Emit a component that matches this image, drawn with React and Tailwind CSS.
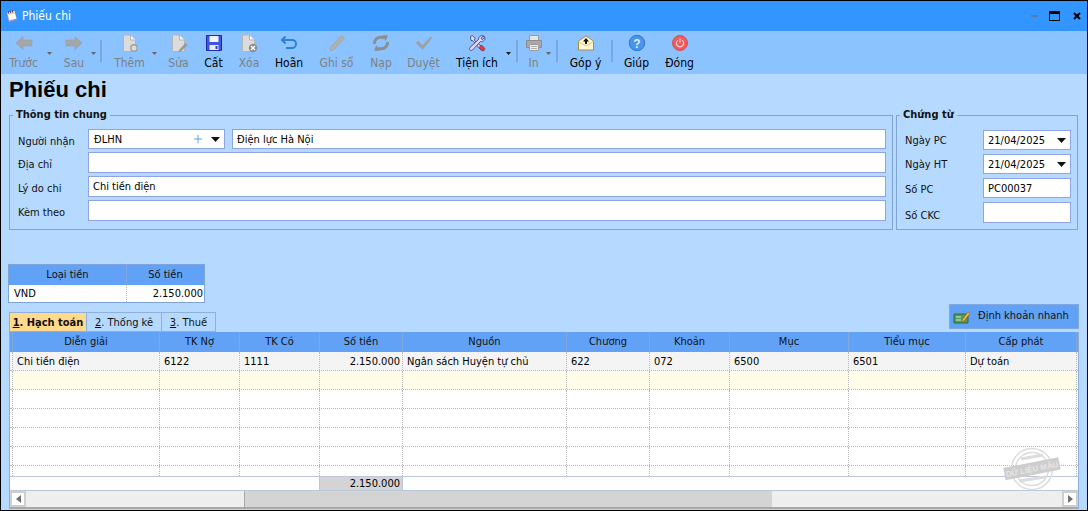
import React from "react";

const Caret = ({ cls = "", dark }) => (
  <svg width="5" height="3" viewBox="0 0 5 3" className={"block shrink-0 mt-[21px] " + cls}>
    <path d="M0 0H5L2.5 3Z" fill={dark ? "#1a1a1a" : "#666"} />
  </svg>
);
const Sep = ({ cls = "" }) => <div className={"w-[2px] h-[22px] mt-[9px] bg-[#79a8dc] shrink-0 " + cls} />;

const Doc = ({ children, fill = "#dcdcdc" }) => (
  <svg width="20" height="20" viewBox="0 0 20 20">
    <path d="M3.5 2H10.5L15.5 7V18.5H3.5Z" fill={fill} stroke="#b4b4b4" />
    <path d="M10.5 2V7H15.5" fill="#f4f4f4" stroke="#b4b4b4" />
    {children}
  </svg>
);

const icons = {
  back: (
    <svg width="20" height="20" viewBox="0 0 20 20"><path d="M2 10L9 3.5V7H18V13H9V16.5Z" fill="#a6a6a6" stroke="#999" strokeWidth=".5" /></svg>
  ),
  next: (
    <svg width="20" height="20" viewBox="0 0 20 20"><path d="M18 10L11 3.5V7H2V13H11V16.5Z" fill="#a6a6a6" stroke="#999" strokeWidth=".5" /></svg>
  ),
  add: <Doc><circle cx="14" cy="15" r="3.2" fill="#dcdcdc" stroke="#a0a0a0" strokeWidth="1.4" /></Doc>,
  edit: <Doc><path d="M10 17L16.5 10L18.5 12L12 18.5L9.5 19Z" fill="#9a9a9a" /></Doc>,
  del: <Doc><circle cx="14" cy="15" r="4.2" fill="#8c8c8c" /><path d="M12 13L16 17M16 13L12 17" stroke="#fff" strokeWidth="1.3" /></Doc>,
  save: (
    <svg width="20" height="20" viewBox="0 0 20 20">
      <path d="M2.5 2.5H17.5V17.5H2.5Z" fill="#3d55e0" stroke="#1c2bb0" />
      <path d="M5.5 3V9H14.5V3Z" fill="#eef2ff" />
      <path d="M5.5 12H14.5V17H5.5Z" fill="#e8eaf6" />
      <path d="M11.5 13H13.5V16H11.5Z" fill="#2d3fc0" />
    </svg>
  ),
  undo: (
    <svg width="20" height="20" viewBox="0 0 20 20" fill="none">
      <path d="M6.5 3.5L3 7L6.5 10.5" stroke="#2f7fdc" strokeWidth="2" />
      <path d="M3.5 7H13C15.2 7 17 8.6 17 10.8C17 13 15.2 15 13 15H7" stroke="#2f7fdc" strokeWidth="2" />
    </svg>
  ),
  pencil: (
    <svg width="20" height="20" viewBox="0 0 20 20"><path d="M14.5 2.5L17.5 5L7 16.5L3 18L4 13.5Z" fill="#b0b0b0" stroke="#a0a0a0" strokeWidth=".6" /></svg>
  ),
  reload: (
    <svg width="20" height="20" viewBox="0 0 20 20" fill="none" stroke="#8e8e8e" strokeWidth="3">
      <path d="M3.5 11C3 7 6 4.3 10 4.3C11 4.3 12 4.5 13 5" />
      <path d="M16.5 9C17 13 14 15.7 10 15.7C9 15.7 8 15.5 7 15" />
      <path d="M11.5 2L17 2.5L14.5 8Z" fill="#8e8e8e" stroke="none" />
      <path d="M8.5 18L3 17.5L5.5 12Z" fill="#8e8e8e" stroke="none" />
    </svg>
  ),
  check: (
    <svg width="20" height="20" viewBox="0 0 20 20"><path d="M1.5 9.5L4.5 8L8.5 12L17 3.5L18.5 4.5L8.5 17Z" fill="#a0a0a0" /></svg>
  ),
  tools: (
    <svg width="20" height="20" viewBox="0 0 20 20">
      <path d="M3.5 3.5L5.5 2.5L8 5.5L7 7L15.5 14.5L13.5 16.5L5.5 7.5L4 7.5Z" fill="#dfe6f6" stroke="#4a3f8a" strokeWidth=".9" />
      <path d="M17.5 3.5C15 1.5 11.5 3 11.5 6.5L3 14.5C1.5 16 3.5 18.5 5.5 17L13.5 8.5C16.5 9 18.5 6.5 18 4.5L15.5 6.5L14 5.5L15.5 3.5Z" fill="#e2d6f6" stroke="#4a3f8a" strokeWidth=".9" />
      <path d="M12 14.5L14.5 12L18 15.5L16.5 18L14.5 17.5Z" fill="#de3a44" stroke="#8f1c22" strokeWidth=".6" />
    </svg>
  ),
  printer: (
    <svg width="20" height="20" viewBox="0 0 20 20">
      <path d="M5.5 2.5H14.5V7.5H5.5Z" fill="#e6e6e6" stroke="#9c9c9c" />
      <path d="M2.5 7.5H17.5V14.5H2.5Z" fill="#a8a8a8" stroke="#8c8c8c" />
      <path d="M5.5 11.5H14.5V17.5H5.5Z" fill="#ececec" stroke="#9c9c9c" />
      <path d="M7 13.5H13M7 15.5H13" stroke="#b0b0b0" />
    </svg>
  ),
  mail: (
    <svg width="20" height="20" viewBox="0 0 20 20">
      <path d="M2.5 8L10 3L17.5 8V17H2.5Z" fill="#fff6d4" stroke="#b08a3c" />
      <path d="M2.5 8.5L10 13L17.5 8.5" fill="none" stroke="#e0c47e" />
      <path d="M10 5L13 8.5H11V11H9V8.5H7Z" fill="#111" />
    </svg>
  ),
  help: (
    <svg width="20" height="20" viewBox="0 0 20 20">
      <circle cx="10" cy="10" r="7.7" fill="#4a94ec" stroke="#2f76d0" />
      <text x="10" y="14.5" textAnchor="middle" fontSize="12" fontWeight="700" fill="#dcecff" fontFamily="Liberation Sans, sans-serif">?</text>
    </svg>
  ),
  power: (
    <svg width="20" height="20" viewBox="0 0 20 20" fill="none">
      <circle cx="10" cy="10" r="7.5" fill="#ee5b5f" stroke="#d94c50" />
      <path d="M7.8 7.4A3.6 3.6 0 1 0 12.2 7.4" stroke="#ffd9d9" strokeWidth="1.1" />
      <path d="M10 5.5V9.5" stroke="#ffd9d9" strokeWidth="1.1" />
    </svg>
  ),
};

const ToolButton = ({ icon, label, cls, off }) => (
  <div className={"flex flex-col items-center shrink-0 whitespace-nowrap " + cls}>
    <div className="h-[20px] w-[20px] mt-[2px]">{icons[icon]}</div>
    <span className={"text-[12px] leading-[20px] " + (off ? "text-[#808080]" : "text-black")}>{label}</span>
  </div>
);

const Toolbar = () => (
  <div className="h-[43px] bg-[#8ac3ff] flex shrink-0">
    <ToolButton icon="back" label="Trước" cls="w-[45px]" off />
    <Caret cls="ml-[1px]" />
    <ToolButton icon="next" label="Sau" cls="ml-[5px] w-[34px]" off />
    <Caret />
    <Sep cls="ml-[4px]" />
    <ToolButton icon="add" label="Thêm" cls="ml-[5px] w-[45px]" off />
    <Caret />
    <ToolButton icon="edit" label="Sửa" cls="w-[43px]" off />
    <ToolButton icon="save" label="Cất" cls="w-[27px]" />
    <ToolButton icon="del" label="Xóa" cls="w-[44px]" off />
    <ToolButton icon="undo" label="Hoãn" cls="w-[36px]" />
    <ToolButton icon="pencil" label="Ghi sổ" cls="w-[59px]" off />
    <ToolButton icon="reload" label="Nạp" cls="w-[30px]" off />
    <ToolButton icon="check" label="Duyệt" cls="w-[55px]" off />
    <ToolButton icon="tools" label="Tiện ích" cls="w-[52px]" />
    <Caret cls="ml-[3px]" dark />
    <Sep cls="ml-[5px]" />
    <ToolButton icon="printer" label="In" cls="ml-[3px] w-[25px]" off />
    <Caret />
    <Sep cls="ml-[5px]" />
    <ToolButton icon="mail" label="Góp ý" cls="ml-[2px] w-[51px]" />
    <Sep />
    <ToolButton icon="help" label="Giúp" cls="w-[47px]" />
    <ToolButton icon="power" label="Đóng" cls="w-[39px]" />
  </div>
);

const Field = ({ children, cls = "h-[21px] flex-1" }) => (
  <div className={"bg-white border border-[#8fa4e4] flex items-center pl-[4px] pt-[2px] whitespace-nowrap " + cls}>{children}</div>
);

const ComboCaret = () => (
  <svg width="9" height="5" viewBox="0 0 9 5" className="shrink-0 -mt-[2px]"><path d="M0 0H9L4.5 5Z" fill="#111" /></svg>
);

const Row = ({ label, children }) => (
  <div className="flex items-center">
    <span className="w-[78px] pl-[8px] pt-[4px] leading-[15px] text-[#111]">{label}</span>
    {children}
  </div>
);

const Group = ({ title, cls, children }) => (
  <div className={"relative border border-[#7fa4d8] shrink-0 " + cls}>
    <span className="absolute -top-[9px] left-[3px] bg-[#b5d9ff] px-[3px] leading-[16px] font-bold text-[#111]">{title}</span>
    {children}
  </div>
);

const DateRow = ({ label, children, cls = "pt-[1px]" }) => (
  <div className="flex items-center">
    <span className={"w-[86px] pl-[8px] leading-[13px] text-[#111] " + cls}>{label}</span>
    {children}
  </div>
);

const gridCols = "grid grid-cols-[2px_147px_80px_80px_83px_164px_83px_80px_119px_117px_111px_2px]";
const heads = ["Diễn giải", "TK Nợ", "TK Có", "Số tiền", "Nguồn", "Chương", "Khoản", "Mục", "Tiểu mục", "Cấp phát"];
const row1 = ["Chi tiền điện", "6122", "1111", "2.150.000", "Ngân sách Huyện tự chủ", "622", "072", "6500", "6501", "Dự toán"];

const DataRow = ({ values, bg = "bg-white", h = "h-[19px]" }) => (
  <div className={gridCols + " border-b border-dotted border-[#b8b8b8] shrink-0 " + bg + " " + h}>
    <div />
    {Array.from({ length: 10 }).map((_, i) => (
      <div key={i} className={"border-l border-dotted border-[#b8b8b8] pl-[4px] pr-[2px] leading-[20px] whitespace-nowrap overflow-hidden text-black " + (i === 3 ? "text-right" : "") }>
        {values ? values[i] : ""}
      </div>
    ))}
    <div className="border-l border-dotted border-[#b8b8b8]" />
  </div>
);

const Arrow = ({ left }) => (
  <div className="w-[16px] bg-white border-2 border-[#cfcfcf] flex items-center justify-center shrink-0">
    <svg width="5" height="8" viewBox="0 0 5 8"><path d={left ? "M5 0V8L0 4Z" : "M0 0V8L5 4Z"} fill="#707070" /></svg>
  </div>
);

const Stamp = () => (
  <svg width="58" height="48" viewBox="0 0 58 48" className="absolute right-[17px] bottom-[16px] pointer-events-none">
    <circle cx="29" cy="24" r="20.5" fill="none" stroke="#dcdcdc" strokeWidth="1.5" />
    <circle cx="29" cy="24" r="16.5" fill="none" stroke="#dcdcdc" strokeWidth="1.5" />
    <path d="M18 14L40 10M16 36L42 32" stroke="#dcdcdc" strokeWidth="3" />
    <g transform="rotate(-11 29 24)">
      <rect x="1" y="17.5" width="56" height="12.5" fill="#cdcdcd" />
      <text x="29" y="27" textAnchor="middle" fontSize="8" fontWeight="700" fill="#e6e6e6" fontFamily="Liberation Sans, sans-serif">DỮ LIỆU MẪU</text>
    </g>
  </svg>
);

export default function App() {
  return (
    <div className="w-[1088px] h-[511px] border border-black bg-[#b5d9ff] flex flex-col overflow-hidden text-[11px] font-['DejaVu_Sans_Condensed','Liberation_Sans',sans-serif]">
      <div className="h-[30px] bg-[#3395ff] flex items-center shrink-0">
        <svg width="14" height="14" viewBox="0 0 14 14" className="ml-[3px]">
          <path d="M2.5 4L10 2.5L13 11L5 13Z" fill="#9d8fd8" />
          <path d="M3.5 3.5L10.5 2L12.5 9.5L5 11.5Z" fill="#fbfbf2" />
          <path d="M3 4L10.5 2.5L11 4.5L3.5 6Z" fill="#f2d75e" />
          <path d="M4.5 2V4.5M6.5 1.5V4M8.5 1V3.5" stroke="#5a4aa8" />
        </svg>
        <span className="ml-[4px] text-[12px] text-white">Phiếu chi</span>
        <div className="ml-auto flex items-center">
          <div className="w-[7px] h-[2px] bg-[#5a7ca8]" />
          <div className="ml-[11px] w-[11px] h-[10px] border border-black border-t-[3px]" />
          <svg width="8" height="8" viewBox="0 0 8 8" className="ml-[13px] mr-[6px]"><path d="M1 1L7 7M7 1L1 7" stroke="#000" strokeWidth="2" /></svg>
        </div>
      </div>
      <Toolbar />
      <div className="h-[41px] pl-[8px] pt-[3px] shrink-0">
        <h1 className="text-[22px] leading-[26px] font-bold text-black font-['Liberation_Sans',sans-serif]">Phiếu chi</h1>
      </div>

      <div className="flex gap-[3px] ml-[8px] shrink-0">
        <Group title="Thông tin chung" cls="w-[884px] h-[115px] pt-[13px] pr-[6px]">
          <div className="flex flex-col gap-[3px]">
            <Row label="Người nhận">
              <div className="w-[137px] h-[20px] bg-white border border-[#8fa4e4] flex items-center pl-[5px] pr-[4px] pt-[2px]">
                <span>ĐLHN</span>
                <svg width="8" height="8" viewBox="0 0 8 8" className="ml-auto mr-[9px] shrink-0 -mt-[2px]"><path d="M4 0V8M0 4H8" stroke="#5fa0d8" /></svg>
                <ComboCaret />
              </div>
              <Field cls="h-[20px] flex-1 ml-[7px]">Điện lực Hà Nội</Field>
            </Row>
            <Row label="Địa chỉ"><Field /></Row>
            <Row label="Lý do chi"><Field>Chi tiền điện</Field></Row>
            <Row label="Kèm theo"><Field /></Row>
          </div>
        </Group>
        <Group title="Chứng từ" cls="w-[182px] h-[115px] pt-[14px]">
          <div className="flex flex-col gap-[4px]">
            <DateRow label="Ngày PC">
              <Field cls="w-[88px] h-[20px] pr-[4px] justify-between">21/04/2025<ComboCaret /></Field>
            </DateRow>
            <DateRow label="Ngày HT">
              <Field cls="w-[88px] h-[20px] pr-[4px] justify-between">21/04/2025<ComboCaret /></Field>
            </DateRow>
            <DateRow label="Số PC" cls="pt-[2px]"><Field cls="w-[88px] h-[20px]">PC00037</Field></DateRow>
            <DateRow label="Số CKC" cls="pt-[6px]"><Field cls="w-[88px] h-[21px]" /></DateRow>
          </div>
        </Group>
      </div>

      <div className="ml-[7px] mt-[34px] w-[197px] border border-[#7fa4d8] shrink-0">
        <div className="grid grid-cols-[117px_78px] h-[20px] bg-[#62a2f6] leading-[20px] text-center text-[#111]">
          <div>Loại tiền</div>
          <div className="border-l border-[#7fa8e0]">Số tiền</div>
        </div>
        <div className="grid grid-cols-[117px_78px] h-[17px] bg-white leading-[17px] text-black">
          <div className="pl-[5px]">VND</div>
          <div className="border-l border-dotted border-[#b8b8b8] text-right pr-[1px]">2.150.000</div>
        </div>
      </div>

      <div className="mt-[1px] h-[28px] ml-[8px] mr-[8px] flex justify-between items-end shrink-0">
        <div className="flex h-[20px] leading-[19px] text-[#111] whitespace-nowrap">
          <div className="w-[78px] bg-[#ffd98c] border border-[#8fb0dc] text-center font-bold"><u>1</u>. Hạch toán</div>
          <div className="w-[75px] border border-l-0 border-[#8fb0dc] text-center"><u>2</u>. Thống kê</div>
          <div className="w-[54px] border border-l-0 border-[#8fb0dc] text-center"><u>3</u>. Thuế</div>
        </div>
        <div className="self-start w-[130px] h-[25px] bg-[#62a2f6] border border-[#7fa8e0] flex items-center text-[#111]">
          <svg width="18" height="14" viewBox="0 0 18 14" className="ml-[3px]">
            <path d="M1 4H15V13H1Z" fill="#4d9a5a" stroke="#2c6b3a" />
            <path d="M3 7H8M3 10H8" stroke="#d8efd8" />
            <path d="M9 10L15 2L17 3.5L11 11L8.5 11.5Z" fill="#f0b93a" stroke="#b5522c" strokeWidth=".6" />
          </svg>
          <span className="ml-[7px]">Định khoản nhanh</span>
        </div>
      </div>

      <div className="relative ml-[8px] w-[1070px] flex-1 min-h-0 mb-[1px] border-x border-[#8fb0dc] bg-white flex flex-col overflow-hidden">
        <div className={gridCols + " h-[20px] bg-[#62a2f6] shrink-0 leading-[20px] text-center text-[#111]"}>
          <div />
          {heads.map((h) => (
            <div key={h} className="border-l border-[#7fa8e0]">{h}</div>
          ))}
          <div className="border-l border-[#7fa8e0]" />
        </div>
        <div className="flex-1 min-h-0 overflow-hidden">
          <DataRow values={row1} bg="bg-[#f4f4f4]" />
          <DataRow bg="bg-[#fffde8]" />
          <DataRow />
          <DataRow />
          <DataRow />
          <DataRow />
          <DataRow h="h-[13px]" />
        </div>
        <div className={gridCols + " h-[15px] border-y border-[#b9c9d9] shrink-0 leading-[13px]"}>
          <div className="col-span-4" />
          <div className="bg-[#d4d4d4] text-right pr-[2px] border-l border-[#b9c9d9]">2.150.000</div>
          <div className="col-span-7 border-l border-[#b9c9d9]" />
        </div>
        <div className="h-[18px] bg-[#eeeeee] border-b-2 border-[#a8a8a8] flex shrink-0">
          <Arrow left />
          <div className="w-[218px]" />
          <div className="w-[528px] bg-[#d4d4d4] border-l border-[#a8a8a8]" />
          <div className="flex-1" />
          <Arrow />
        </div>
        <Stamp />
      </div>
    </div>
  );
}
